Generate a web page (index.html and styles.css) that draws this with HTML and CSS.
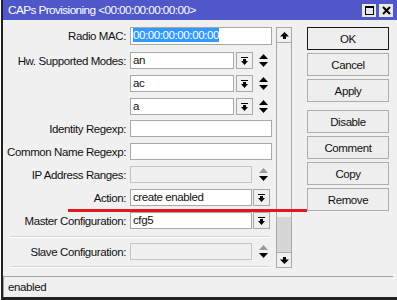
FILE: index.html
```html
<!DOCTYPE html>
<html lang="en">
<head>
  <meta charset="UTF-8" />
  <title>CAPs Provisioning</title>
  <link rel="stylesheet" href="styles.css">
</head>
<body>

<div class="window">
  <div class="titlebar">
    <span class="title">CAPs Provisioning &lt;00:00:00:00:00:00&gt;</span>
    <div class="title-btns">
      <span class="tbtn">
        <svg width="9" height="9" viewBox="0 0 9 9"><path d="M0 0h9v9H0z M1 2v6h7V2z" fill="#000" fill-rule="evenodd"/></svg>
      </span>
      <span class="tbtn">
        <svg width="9" height="9" viewBox="0 0 9 9"><path d="M1 1L8 8M8 1L1 8" stroke="#000" stroke-width="2"/></svg>
      </span>
    </div>
  </div>

  <div class="main">
    <div class="form">
      <div class="row first">
        <span class="label">Radio MAC:</span>
        <span class="field"><span class="sel">00:00:00:00:00:00</span></span>
      </div>

      <div class="row">
        <span class="label">Hw. Supported Modes:</span>
        <span class="field short">an</span>
        <span class="dd"><svg width="7" height="8" viewBox="0 0 7 8"><path d="M0 0h7v1H0z M2 2h3v2H2z M0 4h7L3.5 8z"/></svg></span>
        <span class="ud"><svg width="9" height="13" viewBox="0 0 9 13"><path d="M4.5 0L9 5H0z M0 8h9l-4.5 5z"/></svg></span>
      </div>
      <div class="row">
        <span class="label"></span>
        <span class="field short">ac</span>
        <span class="dd"><svg width="7" height="8" viewBox="0 0 7 8"><path d="M0 0h7v1H0z M2 2h3v2H2z M0 4h7L3.5 8z"/></svg></span>
        <span class="ud"><svg width="9" height="13" viewBox="0 0 9 13"><path d="M4.5 0L9 5H0z M0 8h9l-4.5 5z"/></svg></span>
      </div>
      <div class="row last-mode">
        <span class="label"></span>
        <span class="field short">a</span>
        <span class="dd"><svg width="7" height="8" viewBox="0 0 7 8"><path d="M0 0h7v1H0z M2 2h3v2H2z M0 4h7L3.5 8z"/></svg></span>
        <span class="ud"><svg width="9" height="13" viewBox="0 0 9 13"><path d="M4.5 0L9 5H0z M0 8h9l-4.5 5z"/></svg></span>
      </div>

      <div class="row">
        <span class="label">Identity Regexp:</span>
        <span class="field"></span>
      </div>
      <div class="row">
        <span class="label">Common Name Regexp:</span>
        <span class="field"></span>
      </div>
      <div class="row">
        <span class="label">IP Address Ranges:</span>
        <span class="field mid off"></span>
        <span class="ud wide"><svg width="9" height="13" viewBox="0 0 9 13"><path d="M4.5 0L9 5H0z" fill="#9a9a9a"/><path d="M0 8h9l-4.5 5z"/></svg></span>
      </div>
      <div class="row">
        <span class="label">Action:</span>
        <span class="field mid">create enabled</span>
        <span class="dd near"><svg width="7" height="8" viewBox="0 0 7 8"><path d="M0 0h7v1H0z M2 2h3v2H2z M0 4h7L3.5 8z"/></svg></span>
      </div>
      <div class="row master">
        <span class="label">Master Configuration:</span>
        <span class="field mid">cfg5</span>
        <span class="dd near"><svg width="7" height="8" viewBox="0 0 7 8"><path d="M0 0h7v1H0z M2 2h3v2H2z M0 4h7L3.5 8z"/></svg></span>
      </div>
      <div class="sep"></div>
      <div class="row slave">
        <span class="label">Slave Configuration:</span>
        <span class="field mid off"></span>
        <span class="ud wide"><svg width="9" height="13" viewBox="0 0 9 13"><path d="M4.5 0L9 5H0z" fill="#9a9a9a"/><path d="M0 8h9l-4.5 5z"/></svg></span>
      </div>
      <div class="sep"></div>
    </div>

    <div class="scroll">
      <div class="sb-btn up"><svg width="9" height="7" viewBox="0 0 9 7"><path d="M4.5 0L9 4.5H6V7H3V4.5H0z"/></svg></div>
      <div class="track"><div class="thumb"></div></div>
      <div class="sb-btn down"><svg width="9" height="7" viewBox="0 0 9 7"><path d="M3 0h3v2.5h3L4.5 7 0 2.5h3z"/></svg></div>
    </div>

    <div class="buttons">
      <div class="btn default">OK</div>
      <div class="btn">Cancel</div>
      <div class="btn">Apply</div>
      <div class="btn spaced">Disable</div>
      <div class="btn">Comment</div>
      <div class="btn">Copy</div>
      <div class="btn">Remove</div>
    </div>
  </div>

  <div class="status">enabled</div>

  <!-- red underline drawn over the dialog -->
  <div class="mark"></div>
</div>

</body>
</html>
```

FILE: styles.css
```css
* {
  box-sizing: border-box;
}

body {
  margin: 0;
  background-color: #fff;
  font-family: "Liberation Sans", Arial, sans-serif;
  font-size: 11.5px;
  letter-spacing: -0.4px;
  color: #111;
  overflow: hidden;
}

.window {
  position: relative;
  margin-left: 1px;
  height: 300px;
  border-left: 2px solid #222;
  border-bottom: 3px solid #222;
  background-color: #f0f0f0;
  display: flex;
  flex-direction: column;
}

.titlebar {
  height: 20px;
  flex: none;
  background-color: #4f57c9;
  color: #fff;
  display: flex;
  align-items: center;
  padding-left: 5px;
}

.title {
  font-size: 11.8px;
  letter-spacing: -0.6px;
}

.title-btns {
  margin-left: auto;
  margin-right: 4px;
  display: flex;
  gap: 3px;
}

.tbtn {
  width: 14px;
  height: 13px;
  background-color: #e8e8e8;
  display: flex;
  align-items: center;
  justify-content: center;
}

.main {
  height: 256px;
  flex: none;
  display: flex;
}

.form {
  width: 273px;
  padding-top: 7px;
}

.row {
  display: flex;
  align-items: center;
  height: 17px;
  margin-bottom: 6px;
}

.row.first {
  height: 18px;
  margin-bottom: 7px;
}

.row.last-mode {
  margin-bottom: 5px;
}

.row.master {
  margin-bottom: 7px;
}

.label {
  width: 123px;
  margin-right: 4px;
  text-align: right;
  white-space: nowrap;
}

.field {
  width: 142px;
  height: 100%;
  border: 1px solid #a8a8a8;
  background-color: #fff;
  padding-left: 2px;
  line-height: 15px;
  white-space: nowrap;
  overflow: hidden;
}

.field.short {
  width: 104px;
}

.field.mid {
  width: 122px;
}

.field.off {
  background-color: #f0f0f0;
  border-color: #c4c4c4;
}

.sel {
  background-color: #3399ff;
  color: #fff;
  display: inline-block;
  line-height: 14px;
}

.dd {
  width: 17px;
  height: 17px;
  margin-left: 2px;
  border: 1px solid #a8a8a8;
  background-color: #f0f0f0;
  display: flex;
  align-items: center;
  justify-content: center;
}

.dd.near {
  margin-left: 1px;
}

.ud {
  margin-left: 6px;
  display: flex;
}

.ud.wide {
  margin-left: 7px;
}

.sep {
  height: 2px;
  margin: 0 6px 5px 7px;
  border-top: 1px solid #d4d4d4;
  border-bottom: 1px solid #fff;
}

.scroll {
  width: 16px;
  height: 241px;
  margin-top: 7px;
  border: 1px solid #a8a8a8;
  background-color: #f0f0f0;
  display: flex;
  flex-direction: column;
}

.sb-btn {
  height: 15px;
  flex: none;
  display: flex;
  align-items: center;
  justify-content: center;
}

.sb-btn.up {
  border-bottom: 1px solid #a8a8a8;
}

.sb-btn.down {
  border-top: 1px solid #a8a8a8;
}

.track {
  flex: 1;
  display: flex;
  flex-direction: column;
  justify-content: flex-end;
}

.thumb {
  height: 35px;
  background-color: #d6d6d6;
}

.buttons {
  width: 82px;
  margin-left: 15px;
  padding-top: 7px;
  display: flex;
  flex-direction: column;
  gap: 3px;
}

.btn {
  height: 23px;
  border: 1px solid #adadad;
  background-color: #eeeeee;
  display: flex;
  align-items: center;
  justify-content: center;
}

.btn.default {
  border-color: #1a1a1a;
}

.btn.spaced {
  margin-top: 5px;
}

.status {
  height: 21px;
  flex: none;
  margin-right: 4px;
  border-top: 1px solid #a4a4a4;
  border-left: 1px solid #a4a4a4;
  padding-left: 4px;
  line-height: 20px;
}

.mark {
  position: absolute;
  left: 65px;
  top: 209px;
  width: 239px;
  height: 3px;
  background-color: #e0181e;
}
```
